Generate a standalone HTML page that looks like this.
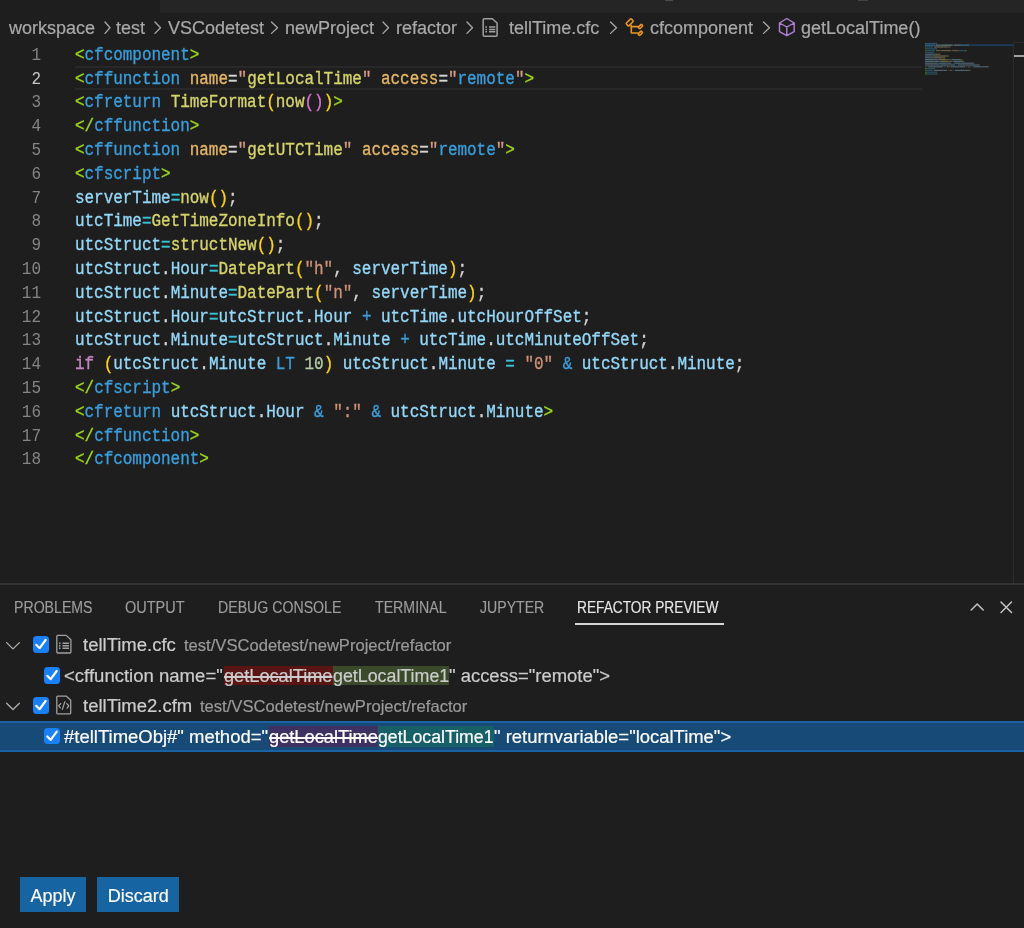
<!DOCTYPE html>
<html><head><meta charset="utf-8">
<style>
*{margin:0;padding:0;box-sizing:border-box}
html,body{width:1024px;height:928px;overflow:hidden;background:#1e1e1e}
body{position:relative;font-family:"Liberation Sans",sans-serif;color:#ccc}
.abs{position:absolute}
svg{position:absolute;overflow:visible}
#tabstrip{left:160px;top:0;width:864px;height:13px;background:#252526}
.bc{position:absolute;top:15px;height:26px;line-height:26px;font-size:18px;color:#a9a9a9;white-space:nowrap;-webkit-text-stroke:0.2px currentColor}
.ln{position:absolute;left:0;transform-origin:0 -3.6px;transform:scaleY(1.11);width:41px;text-align:right;font-family:"Liberation Mono",monospace;font-size:16px;color:#858585;height:23.81px;line-height:23.81px}
.cl{position:absolute;left:75px;transform-origin:0 -3.6px;transform:scaleY(1.11);font-family:"Liberation Mono",monospace;font-size:16px;height:23.81px;line-height:23.81px;white-space:pre;color:#d4d4d4;letter-spacing:-0.04px;-webkit-text-stroke:0.3px currentColor}
.g{color:#9fde18}.t{color:#3a9edc}.a{color:#e5b567}.q{color:#d69a85}.s{color:#ce9178}.f{color:#d6d46a}.v{color:#94d8f8}.o{color:#38c2d6}.p1{color:#ffd700}.p2{color:#da70d6}.k{color:#c586c0}.n{color:#b5cea8}.w{color:#d4d4d4}.y{color:#d6d46a}
#curline{left:75px;top:66.3px;width:847px;height:23.7px;border-top:2px solid #282828;border-bottom:2px solid #282828}
#vline{left:1013px;top:42px;width:1px;height:541px;background:#2b2b2b}
#panelb{left:0;top:583px;width:1024px;height:2px;background:#333}
.ptab{position:absolute;top:597px;height:22px;line-height:22px;font-size:16px;color:#9d9d9d;white-space:nowrap;-webkit-text-stroke:0.15px currentColor}
#uline{left:575px;top:623px;width:149px;height:2px;background:#d6d6d6}
.cb{position:absolute;width:16.4px;height:16.4px;border-radius:3.5px;background:#1880f8}
.rt{position:absolute;white-space:nowrap;font-size:18px;color:#cccccc;height:30px;line-height:30px;transform-origin:0 0;-webkit-text-stroke:0.2px currentColor}
.w4{color:#fff}
s{text-decoration-thickness:1.6px}
.desc{font-size:16.5px;color:#9a9a9a}
.btn{position:absolute;top:877px;height:35px;background:#1764a3;color:#fff;font-size:18px;line-height:35px;padding-top:1.5px;text-align:center;-webkit-text-stroke:0.15px currentColor}
</style></head><body>
<div id="root" style="position:absolute;left:0;top:0;width:1024px;height:928px;will-change:transform">
<div id="tabstrip" class="abs"></div>
<div class="abs" style="left:665px;top:0;width:8px;height:1px;background:#4a4a4a"></div>
<div class="abs" style="left:858px;top:0;width:10px;height:1px;background:#444"></div>

<!-- breadcrumbs -->
<div class="bc" style="left:9px">workspace</div>
<div class="bc" style="left:116px">test</div>
<div class="bc" style="left:168px">VSCodetest</div>
<div class="bc" style="left:285px">newProject</div>
<div class="bc" style="left:396px">refactor</div>
<div class="bc" style="left:509px">tellTime.cfc</div>
<div class="bc" style="left:650px">cfcomponent</div>
<div class="bc" style="left:801px">getLocalTime()</div>
<svg width="1024" height="45" style="left:0;top:0" fill="none" stroke="#a9a9a9" stroke-width="1.3" stroke-linecap="round" stroke-linejoin="round">
<polyline points="105,22 110,27.7 105,33.4"/>
<polyline points="155,22 160.5,27.7 155,33.4"/>
<polyline points="271.5,22 277.5,27.7 271.5,33.4"/>
<polyline points="383,22 388.5,27.7 383,33.4"/>
<polyline points="467,22 472.5,27.7 467,33.4"/>
<polyline points="610.5,22 616.5,27.7 610.5,33.4"/>
<polyline points="763.5,22 769.5,27.7 763.5,33.4"/>
<path d="M484.2 18.8 H492.3 L497.1 23 V35.2 Q497.1 36.2 496.1 36.2 H484.2 Q483.2 36.2 483.2 35.2 V19.8 Q483.2 18.8 484.2 18.8 Z" stroke-width="1.5" stroke="#a0a0a0"/>
<path d="M485.4 27 H487 M485.4 29.4 H487 M485.4 31.7 H487 M489 27 H495.3 M489 29.4 H495.3 M489 31.7 H495.3" stroke-width="1.5" stroke="#a0a0a0" stroke-linecap="butt"/>
<g stroke="#e8961f" stroke-width="1.6">
<rect x="-3.6" y="-1.85" width="7.2" height="3.7" rx="0.9" transform="translate(629.7,22.4) rotate(-45)"/>
<rect x="-2.2" y="-1.15" width="4.4" height="2.3" rx="0.6" transform="translate(640.5,26.6) rotate(-45)"/>
<rect x="-2.2" y="-1.15" width="4.4" height="2.3" rx="0.6" transform="translate(640.3,33.3) rotate(-45)"/>
<polyline points="631.3,25.6 631.3,33 637.6,33"/>
<polyline points="631.3,26.6 637.8,26.6"/>
</g>
<g stroke="#b180d7" stroke-width="1.4">
<path d="M786.8 18.5 L794.2 23 V31.6 L786.8 35.7 L779.5 31.6 V23 Z M779.5 23 L786.8 27 L794.2 23 M786.8 27 V35.7"/>
</g>
</svg>
<div id="curline" class="abs"></div>
<div class="ln" style="top:42.70px">1</div>
<div class="cl" style="top:42.70px"><span class="g">&lt;</span><span class="t">cfcomponent</span><span class="g">&gt;</span></div>
<div class="ln" style="top:66.51px;color:#c6c6c6">2</div>
<div class="cl" style="top:66.51px"><span class="g">&lt;</span><span class="t">cffunction</span> <span class="a">name</span><span class="w">=</span><span class="q">"</span><span class="y">getLocalTime</span><span class="q">"</span> <span class="a">access</span><span class="w">=</span><span class="q">"</span><span class="t">remote</span><span class="q">"</span><span class="g">&gt;</span></div>
<div class="ln" style="top:90.32px">3</div>
<div class="cl" style="top:90.32px"><span class="g">&lt;</span><span class="t">cfreturn</span> <span class="f">TimeFormat</span><span class="p1">(</span><span class="f">now</span><span class="p2">()</span><span class="p1">)</span><span class="g">&gt;</span></div>
<div class="ln" style="top:114.13px">4</div>
<div class="cl" style="top:114.13px"><span class="g">&lt;/</span><span class="t">cffunction</span><span class="g">&gt;</span></div>
<div class="ln" style="top:137.94px">5</div>
<div class="cl" style="top:137.94px"><span class="g">&lt;</span><span class="t">cffunction</span> <span class="a">name</span><span class="w">=</span><span class="q">"</span><span class="y">getUTCTime</span><span class="q">"</span> <span class="a">access</span><span class="w">=</span><span class="q">"</span><span class="t">remote</span><span class="q">"</span><span class="g">&gt;</span></div>
<div class="ln" style="top:161.75px">6</div>
<div class="cl" style="top:161.75px"><span class="g">&lt;</span><span class="t">cfscript</span><span class="g">&gt;</span></div>
<div class="ln" style="top:185.56px">7</div>
<div class="cl" style="top:185.56px"><span class="v">serverTime</span><span class="o">=</span><span class="f">now</span><span class="p1">()</span><span class="w">;</span></div>
<div class="ln" style="top:209.37px">8</div>
<div class="cl" style="top:209.37px"><span class="v">utcTime</span><span class="o">=</span><span class="f">GetTimeZoneInfo</span><span class="p1">()</span><span class="w">;</span></div>
<div class="ln" style="top:233.18px">9</div>
<div class="cl" style="top:233.18px"><span class="v">utcStruct</span><span class="o">=</span><span class="f">structNew</span><span class="p1">()</span><span class="w">;</span></div>
<div class="ln" style="top:256.99px">10</div>
<div class="cl" style="top:256.99px"><span class="v">utcStruct</span><span class="w">.</span><span class="v">Hour</span><span class="o">=</span><span class="f">DatePart</span><span class="p1">(</span><span class="s">"h"</span><span class="w">, </span><span class="v">serverTime</span><span class="p1">)</span><span class="w">;</span></div>
<div class="ln" style="top:280.80px">11</div>
<div class="cl" style="top:280.80px"><span class="v">utcStruct</span><span class="w">.</span><span class="v">Minute</span><span class="o">=</span><span class="f">DatePart</span><span class="p1">(</span><span class="s">"n"</span><span class="w">, </span><span class="v">serverTime</span><span class="p1">)</span><span class="w">;</span></div>
<div class="ln" style="top:304.61px">12</div>
<div class="cl" style="top:304.61px"><span class="v">utcStruct</span><span class="w">.</span><span class="v">Hour</span><span class="o">=</span><span class="v">utcStruct</span><span class="w">.</span><span class="v">Hour</span> <span class="t">+</span> <span class="v">utcTime</span><span class="w">.</span><span class="v">utcHourOffSet</span><span class="w">;</span></div>
<div class="ln" style="top:328.42px">13</div>
<div class="cl" style="top:328.42px"><span class="v">utcStruct</span><span class="w">.</span><span class="v">Minute</span><span class="o">=</span><span class="v">utcStruct</span><span class="w">.</span><span class="v">Minute</span> <span class="t">+</span> <span class="v">utcTime</span><span class="w">.</span><span class="v">utcMinuteOffSet</span><span class="w">;</span></div>
<div class="ln" style="top:352.23px">14</div>
<div class="cl" style="top:352.23px"><span class="k">if</span> <span class="p1">(</span><span class="v">utcStruct</span><span class="w">.</span><span class="v">Minute</span> <span class="t">LT</span> <span class="n">10</span><span class="p1">)</span> <span class="v">utcStruct</span><span class="w">.</span><span class="v">Minute</span> <span class="o">=</span> <span class="s">"0"</span> <span class="t">&amp;</span> <span class="v">utcStruct</span><span class="w">.</span><span class="v">Minute</span><span class="w">;</span></div>
<div class="ln" style="top:376.04px">15</div>
<div class="cl" style="top:376.04px"><span class="g">&lt;/</span><span class="t">cfscript</span><span class="g">&gt;</span></div>
<div class="ln" style="top:399.85px">16</div>
<div class="cl" style="top:399.85px"><span class="g">&lt;</span><span class="t">cfreturn</span> <span class="v">utcStruct</span><span class="w">.</span><span class="v">Hour</span> <span class="t">&amp;</span> <span class="s">":"</span> <span class="t">&amp;</span> <span class="v">utcStruct</span><span class="w">.</span><span class="v">Minute</span><span class="g">&gt;</span></div>
<div class="ln" style="top:423.66px">17</div>
<div class="cl" style="top:423.66px"><span class="g">&lt;/</span><span class="t">cffunction</span><span class="g">&gt;</span></div>
<div class="ln" style="top:447.47px">18</div>
<div class="cl" style="top:447.47px"><span class="g">&lt;/</span><span class="t">cfcomponent</span><span class="g">&gt;</span></div>
<div id="vline" class="abs"></div>
<div class="abs" style="left:1014px;top:42px;width:10px;height:1px;background:#2b2b2b"></div>
<div class="abs" style="left:1014px;top:55px;width:10px;height:2px;background:#a0a0a0"></div>
<svg width="1024" height="100" style="left:0;top:0">
<rect x="925" y="44.2" width="88" height="1.9" fill="#1f3a56"/>
<g opacity="0.38">
<rect x="925.00" y="42.80" width="0.91" height="1.2" fill="#9fd81d"/>
<rect x="925.91" y="42.80" width="10.01" height="1.2" fill="#3c9dda"/>
<rect x="935.92" y="42.80" width="0.91" height="1.2" fill="#9fd81d"/>
<rect x="925.00" y="44.60" width="0.91" height="1.2" fill="#9fd81d"/>
<rect x="925.91" y="44.60" width="9.10" height="1.2" fill="#3c9dda"/>
<rect x="935.92" y="44.60" width="3.64" height="1.2" fill="#e5b567"/>
<rect x="939.56" y="44.60" width="0.91" height="1.2" fill="#d4d4d4"/>
<rect x="940.47" y="44.60" width="0.91" height="1.2" fill="#d69a85"/>
<rect x="941.38" y="44.60" width="10.92" height="1.2" fill="#d7d36f"/>
<rect x="952.30" y="44.60" width="0.91" height="1.2" fill="#d69a85"/>
<rect x="954.12" y="44.60" width="5.46" height="1.2" fill="#e5b567"/>
<rect x="959.58" y="44.60" width="0.91" height="1.2" fill="#d4d4d4"/>
<rect x="960.49" y="44.60" width="0.91" height="1.2" fill="#d69a85"/>
<rect x="961.40" y="44.60" width="5.46" height="1.2" fill="#3c9dda"/>
<rect x="966.86" y="44.60" width="0.91" height="1.2" fill="#d69a85"/>
<rect x="967.77" y="44.60" width="0.91" height="1.2" fill="#9fd81d"/>
<rect x="925.00" y="46.40" width="0.91" height="1.2" fill="#9fd81d"/>
<rect x="925.91" y="46.40" width="7.28" height="1.2" fill="#3c9dda"/>
<rect x="934.10" y="46.40" width="9.10" height="1.2" fill="#dcdcaa"/>
<rect x="943.20" y="46.40" width="0.91" height="1.2" fill="#ffd700"/>
<rect x="944.11" y="46.40" width="2.73" height="1.2" fill="#dcdcaa"/>
<rect x="946.84" y="46.40" width="1.82" height="1.2" fill="#da70d6"/>
<rect x="948.66" y="46.40" width="0.91" height="1.2" fill="#ffd700"/>
<rect x="949.57" y="46.40" width="0.91" height="1.2" fill="#9fd81d"/>
<rect x="925.00" y="48.20" width="1.82" height="1.2" fill="#9fd81d"/>
<rect x="926.82" y="48.20" width="9.10" height="1.2" fill="#3c9dda"/>
<rect x="935.92" y="48.20" width="0.91" height="1.2" fill="#9fd81d"/>
<rect x="925.00" y="50.00" width="0.91" height="1.2" fill="#9fd81d"/>
<rect x="925.91" y="50.00" width="9.10" height="1.2" fill="#3c9dda"/>
<rect x="935.92" y="50.00" width="3.64" height="1.2" fill="#e5b567"/>
<rect x="939.56" y="50.00" width="0.91" height="1.2" fill="#d4d4d4"/>
<rect x="940.47" y="50.00" width="0.91" height="1.2" fill="#d69a85"/>
<rect x="941.38" y="50.00" width="9.10" height="1.2" fill="#d7d36f"/>
<rect x="950.48" y="50.00" width="0.91" height="1.2" fill="#d69a85"/>
<rect x="952.30" y="50.00" width="5.46" height="1.2" fill="#e5b567"/>
<rect x="957.76" y="50.00" width="0.91" height="1.2" fill="#d4d4d4"/>
<rect x="958.67" y="50.00" width="0.91" height="1.2" fill="#d69a85"/>
<rect x="959.58" y="50.00" width="5.46" height="1.2" fill="#3c9dda"/>
<rect x="965.04" y="50.00" width="0.91" height="1.2" fill="#d69a85"/>
<rect x="965.95" y="50.00" width="0.91" height="1.2" fill="#9fd81d"/>
<rect x="925.00" y="51.80" width="0.91" height="1.2" fill="#9fd81d"/>
<rect x="925.91" y="51.80" width="7.28" height="1.2" fill="#3c9dda"/>
<rect x="933.19" y="51.80" width="0.91" height="1.2" fill="#9fd81d"/>
<rect x="925.00" y="53.60" width="9.10" height="1.2" fill="#9cdcfe"/>
<rect x="934.10" y="53.60" width="0.91" height="1.2" fill="#4fc1e9"/>
<rect x="935.01" y="53.60" width="2.73" height="1.2" fill="#dcdcaa"/>
<rect x="937.74" y="53.60" width="1.82" height="1.2" fill="#ffd700"/>
<rect x="939.56" y="53.60" width="0.91" height="1.2" fill="#d4d4d4"/>
<rect x="925.00" y="55.40" width="6.37" height="1.2" fill="#9cdcfe"/>
<rect x="931.37" y="55.40" width="0.91" height="1.2" fill="#4fc1e9"/>
<rect x="932.28" y="55.40" width="13.65" height="1.2" fill="#dcdcaa"/>
<rect x="945.93" y="55.40" width="1.82" height="1.2" fill="#ffd700"/>
<rect x="947.75" y="55.40" width="0.91" height="1.2" fill="#d4d4d4"/>
<rect x="925.00" y="57.20" width="8.19" height="1.2" fill="#9cdcfe"/>
<rect x="933.19" y="57.20" width="0.91" height="1.2" fill="#4fc1e9"/>
<rect x="934.10" y="57.20" width="8.19" height="1.2" fill="#dcdcaa"/>
<rect x="942.29" y="57.20" width="1.82" height="1.2" fill="#ffd700"/>
<rect x="944.11" y="57.20" width="0.91" height="1.2" fill="#d4d4d4"/>
<rect x="925.00" y="59.00" width="8.19" height="1.2" fill="#9cdcfe"/>
<rect x="933.19" y="59.00" width="0.91" height="1.2" fill="#d4d4d4"/>
<rect x="934.10" y="59.00" width="3.64" height="1.2" fill="#9cdcfe"/>
<rect x="937.74" y="59.00" width="0.91" height="1.2" fill="#4fc1e9"/>
<rect x="938.65" y="59.00" width="7.28" height="1.2" fill="#dcdcaa"/>
<rect x="945.93" y="59.00" width="0.91" height="1.2" fill="#ffd700"/>
<rect x="946.84" y="59.00" width="2.73" height="1.2" fill="#ce9178"/>
<rect x="949.57" y="59.00" width="0.91" height="1.2" fill="#d4d4d4"/>
<rect x="951.39" y="59.00" width="9.10" height="1.2" fill="#9cdcfe"/>
<rect x="960.49" y="59.00" width="0.91" height="1.2" fill="#ffd700"/>
<rect x="961.40" y="59.00" width="0.91" height="1.2" fill="#d4d4d4"/>
<rect x="925.00" y="60.80" width="8.19" height="1.2" fill="#9cdcfe"/>
<rect x="933.19" y="60.80" width="0.91" height="1.2" fill="#d4d4d4"/>
<rect x="934.10" y="60.80" width="5.46" height="1.2" fill="#9cdcfe"/>
<rect x="939.56" y="60.80" width="0.91" height="1.2" fill="#4fc1e9"/>
<rect x="940.47" y="60.80" width="7.28" height="1.2" fill="#dcdcaa"/>
<rect x="947.75" y="60.80" width="0.91" height="1.2" fill="#ffd700"/>
<rect x="948.66" y="60.80" width="2.73" height="1.2" fill="#ce9178"/>
<rect x="951.39" y="60.80" width="0.91" height="1.2" fill="#d4d4d4"/>
<rect x="953.21" y="60.80" width="9.10" height="1.2" fill="#9cdcfe"/>
<rect x="962.31" y="60.80" width="0.91" height="1.2" fill="#ffd700"/>
<rect x="963.22" y="60.80" width="0.91" height="1.2" fill="#d4d4d4"/>
<rect x="925.00" y="62.60" width="8.19" height="1.2" fill="#9cdcfe"/>
<rect x="933.19" y="62.60" width="0.91" height="1.2" fill="#d4d4d4"/>
<rect x="934.10" y="62.60" width="3.64" height="1.2" fill="#9cdcfe"/>
<rect x="937.74" y="62.60" width="0.91" height="1.2" fill="#4fc1e9"/>
<rect x="938.65" y="62.60" width="8.19" height="1.2" fill="#9cdcfe"/>
<rect x="946.84" y="62.60" width="0.91" height="1.2" fill="#d4d4d4"/>
<rect x="947.75" y="62.60" width="3.64" height="1.2" fill="#9cdcfe"/>
<rect x="952.30" y="62.60" width="0.91" height="1.2" fill="#3c9dda"/>
<rect x="954.12" y="62.60" width="6.37" height="1.2" fill="#9cdcfe"/>
<rect x="960.49" y="62.60" width="0.91" height="1.2" fill="#d4d4d4"/>
<rect x="961.40" y="62.60" width="11.83" height="1.2" fill="#9cdcfe"/>
<rect x="973.23" y="62.60" width="0.91" height="1.2" fill="#d4d4d4"/>
<rect x="925.00" y="64.40" width="8.19" height="1.2" fill="#9cdcfe"/>
<rect x="933.19" y="64.40" width="0.91" height="1.2" fill="#d4d4d4"/>
<rect x="934.10" y="64.40" width="5.46" height="1.2" fill="#9cdcfe"/>
<rect x="939.56" y="64.40" width="0.91" height="1.2" fill="#4fc1e9"/>
<rect x="940.47" y="64.40" width="8.19" height="1.2" fill="#9cdcfe"/>
<rect x="948.66" y="64.40" width="0.91" height="1.2" fill="#d4d4d4"/>
<rect x="949.57" y="64.40" width="5.46" height="1.2" fill="#9cdcfe"/>
<rect x="955.94" y="64.40" width="0.91" height="1.2" fill="#3c9dda"/>
<rect x="957.76" y="64.40" width="6.37" height="1.2" fill="#9cdcfe"/>
<rect x="964.13" y="64.40" width="0.91" height="1.2" fill="#d4d4d4"/>
<rect x="965.04" y="64.40" width="13.65" height="1.2" fill="#9cdcfe"/>
<rect x="978.69" y="64.40" width="0.91" height="1.2" fill="#d4d4d4"/>
<rect x="925.00" y="66.20" width="1.82" height="1.2" fill="#c586c0"/>
<rect x="927.73" y="66.20" width="0.91" height="1.2" fill="#ffd700"/>
<rect x="928.64" y="66.20" width="8.19" height="1.2" fill="#9cdcfe"/>
<rect x="936.83" y="66.20" width="0.91" height="1.2" fill="#d4d4d4"/>
<rect x="937.74" y="66.20" width="5.46" height="1.2" fill="#9cdcfe"/>
<rect x="944.11" y="66.20" width="1.82" height="1.2" fill="#3c9dda"/>
<rect x="946.84" y="66.20" width="1.82" height="1.2" fill="#b5cea8"/>
<rect x="948.66" y="66.20" width="0.91" height="1.2" fill="#ffd700"/>
<rect x="950.48" y="66.20" width="8.19" height="1.2" fill="#9cdcfe"/>
<rect x="958.67" y="66.20" width="0.91" height="1.2" fill="#d4d4d4"/>
<rect x="959.58" y="66.20" width="5.46" height="1.2" fill="#9cdcfe"/>
<rect x="965.95" y="66.20" width="0.91" height="1.2" fill="#4fc1e9"/>
<rect x="967.77" y="66.20" width="2.73" height="1.2" fill="#ce9178"/>
<rect x="971.41" y="66.20" width="0.91" height="1.2" fill="#3c9dda"/>
<rect x="973.23" y="66.20" width="8.19" height="1.2" fill="#9cdcfe"/>
<rect x="981.42" y="66.20" width="0.91" height="1.2" fill="#d4d4d4"/>
<rect x="982.33" y="66.20" width="5.46" height="1.2" fill="#9cdcfe"/>
<rect x="987.79" y="66.20" width="0.91" height="1.2" fill="#d4d4d4"/>
<rect x="925.00" y="68.00" width="1.82" height="1.2" fill="#9fd81d"/>
<rect x="926.82" y="68.00" width="7.28" height="1.2" fill="#3c9dda"/>
<rect x="934.10" y="68.00" width="0.91" height="1.2" fill="#9fd81d"/>
<rect x="925.00" y="69.80" width="0.91" height="1.2" fill="#9fd81d"/>
<rect x="925.91" y="69.80" width="7.28" height="1.2" fill="#3c9dda"/>
<rect x="934.10" y="69.80" width="8.19" height="1.2" fill="#9cdcfe"/>
<rect x="942.29" y="69.80" width="0.91" height="1.2" fill="#d4d4d4"/>
<rect x="943.20" y="69.80" width="3.64" height="1.2" fill="#9cdcfe"/>
<rect x="947.75" y="69.80" width="0.91" height="1.2" fill="#3c9dda"/>
<rect x="949.57" y="69.80" width="2.73" height="1.2" fill="#ce9178"/>
<rect x="953.21" y="69.80" width="0.91" height="1.2" fill="#3c9dda"/>
<rect x="955.03" y="69.80" width="8.19" height="1.2" fill="#9cdcfe"/>
<rect x="963.22" y="69.80" width="0.91" height="1.2" fill="#d4d4d4"/>
<rect x="964.13" y="69.80" width="5.46" height="1.2" fill="#9cdcfe"/>
<rect x="969.59" y="69.80" width="0.91" height="1.2" fill="#9fd81d"/>
<rect x="925.00" y="71.60" width="1.82" height="1.2" fill="#9fd81d"/>
<rect x="926.82" y="71.60" width="9.10" height="1.2" fill="#3c9dda"/>
<rect x="935.92" y="71.60" width="0.91" height="1.2" fill="#9fd81d"/>
<rect x="925.00" y="73.40" width="1.82" height="1.2" fill="#9fd81d"/>
<rect x="926.82" y="73.40" width="10.01" height="1.2" fill="#3c9dda"/>
<rect x="936.83" y="73.40" width="0.91" height="1.2" fill="#9fd81d"/>
</g></svg>
<!-- panel -->
<div id="panelb" class="abs"></div>
<div class="ptab" style="left:14px"><span style="display:inline-block;transform:scaleX(0.883);transform-origin:0 0">PROBLEMS</span></div>
<div class="ptab" style="left:125px"><span style="display:inline-block;transform:scaleX(0.906);transform-origin:0 0">OUTPUT</span></div>
<div class="ptab" style="left:218px"><span style="display:inline-block;transform:scaleX(0.884);transform-origin:0 0">DEBUG CONSOLE</span></div>
<div class="ptab" style="left:375px"><span style="display:inline-block;transform:scaleX(0.886);transform-origin:0 0">TERMINAL</span></div>
<div class="ptab" style="left:480px"><span style="display:inline-block;transform:scaleX(0.881);transform-origin:0 0">JUPYTER</span></div>
<div class="ptab" style="left:577px;color:#e7e7e7"><span style="display:inline-block;transform:scaleX(0.857);transform-origin:0 0">REFACTOR PREVIEW</span></div>
<div id="uline" class="abs"></div>
<svg width="1024" height="928" style="left:0;top:0" fill="none" stroke-linecap="round" stroke-linejoin="round">
<g stroke="#c5c5c5" stroke-width="1.5">
<polyline points="971.2,610 977.2,604 983.2,610"/>
<path d="M1001 602 L1011.5 612.5 M1011.5 602 L1001 612.5"/>
</g>
<g stroke="#b0b0b0" stroke-width="1.3">
<polyline points="6.6,642.6 13,648.9 19.4,642.6"/>
<polyline points="6.6,703.2 13,709.5 19.4,703.2"/>
</g>
</svg>
<!-- selected row -->
<div class="abs" style="left:0;top:721px;width:1024px;height:31px;background:#174a77;border-top:2px solid #1963a4;border-bottom:2px solid #1963a4"></div>
<!-- checkboxes -->
<div class="cb" style="left:32.8px;top:636.3px"></div>
<div class="cb" style="left:43.9px;top:667.3px"></div>
<div class="cb" style="left:32.8px;top:697.3px"></div>
<div class="cb" style="left:43.9px;top:728px"></div>
<svg width="1024" height="928" style="left:0;top:0" fill="none" stroke-linecap="round" stroke-linejoin="round">
<g stroke="#fff" stroke-width="2.2">
<polyline points="36.2,644.8 39.6,648.2 45.6,640"/>
<polyline points="47.3,675.8 50.7,679.2 56.7,671"/>
<polyline points="36.2,705.8 39.6,709.2 45.6,701"/>
<polyline points="47.3,736.5 50.7,739.9 56.7,731.7"/>
</g>
<g stroke="#a0a0a0" stroke-width="1.3">
<path d="M57.8 635.4 H66.2 L70.9 639.8 V652 Q70.9 653 69.9 653 H57.8 Q56.8 653 56.8 652 V636.4 Q56.8 635.4 57.8 635.4 Z"/>
<path d="M59 643.3 H60.5 M59 645.8 H60.5 M59 648.3 H60.5 M62.5 643.3 H69 M62.5 645.8 H69 M62.5 648.3 H69" stroke-linecap="butt" stroke-width="1.4"/>
<path d="M57.8 696.1 H66.2 L70.7 700.3 V712.9 Q70.7 713.9 69.7 713.9 H57.8 Q56.8 713.9 56.8 712.9 V697.1 Q56.8 696.1 57.8 696.1 Z"/>
<path d="M60.7 703.6 L58.7 705.8 L60.3 707.8 M64.9 701.6 L62.3 709.4 M66.8 703.6 L68.75 705.8 L67.1 708.1"/>
</g>
</svg>
<!-- row texts -->
<div class="rt" style="left:83px;top:630.2px;transform:scaleX(1.027)">tellTime.cfc</div>
<div class="rt desc" style="left:184.3px;top:630.2px;transform:scaleX(1.005)">test/VSCodetest/newProject/refactor</div>
<div class="abs" style="left:224.2px;top:665.5px;width:108.6px;height:19.8px;background:#591414"></div>
<div class="abs" style="left:332.8px;top:665.5px;width:116.1px;height:19.8px;background:#3a4a2a"></div>
<div class="rt" style="left:64.3px;top:660.5px;transform:scaleX(1.03)">&lt;cffunction name="</div>
<div class="rt" style="left:224.2px;top:660.5px;transform:scaleX(1.01)"><s>getLocalTime</s></div>
<div class="rt" style="left:332.8px;top:660.5px;transform:scaleX(0.99)">getLocalTime1</div>
<div class="rt" style="left:448.9px;top:660.5px;transform:scaleX(1.024)">" access="remote"&gt;</div>
<div class="rt" style="left:83px;top:691px;transform:scaleX(1.027)">tellTime2.cfm</div>
<div class="rt desc" style="left:200.3px;top:691px;transform:scaleX(1.005)">test/VSCodetest/newProject/refactor</div>
<div class="abs" style="left:269.2px;top:726px;width:108.8px;height:20.6px;background:#3e3060"></div>
<div class="abs" style="left:378px;top:726px;width:115.6px;height:20.6px;background:#176068"></div>
<div class="rt w4" style="left:64.3px;top:721.5px;transform:scaleX(1.027)">#tellTimeObj#" method="</div>
<div class="rt w4" style="left:269.2px;top:721.5px;transform:scaleX(1.013)"><s>getLocalTime</s></div>
<div class="rt w4" style="left:378px;top:721.5px;transform:scaleX(0.984)">getLocalTime1</div>
<div class="rt w4" style="left:493.6px;top:721.5px;transform:scaleX(1.024)">" returnvariable="localTime"&gt;</div>
<!-- buttons -->
<div class="btn" style="left:19.7px;width:66.8px">Apply</div>
<div class="btn" style="left:97.4px;width:81.7px">Discard</div>
</div>
</body></html>
